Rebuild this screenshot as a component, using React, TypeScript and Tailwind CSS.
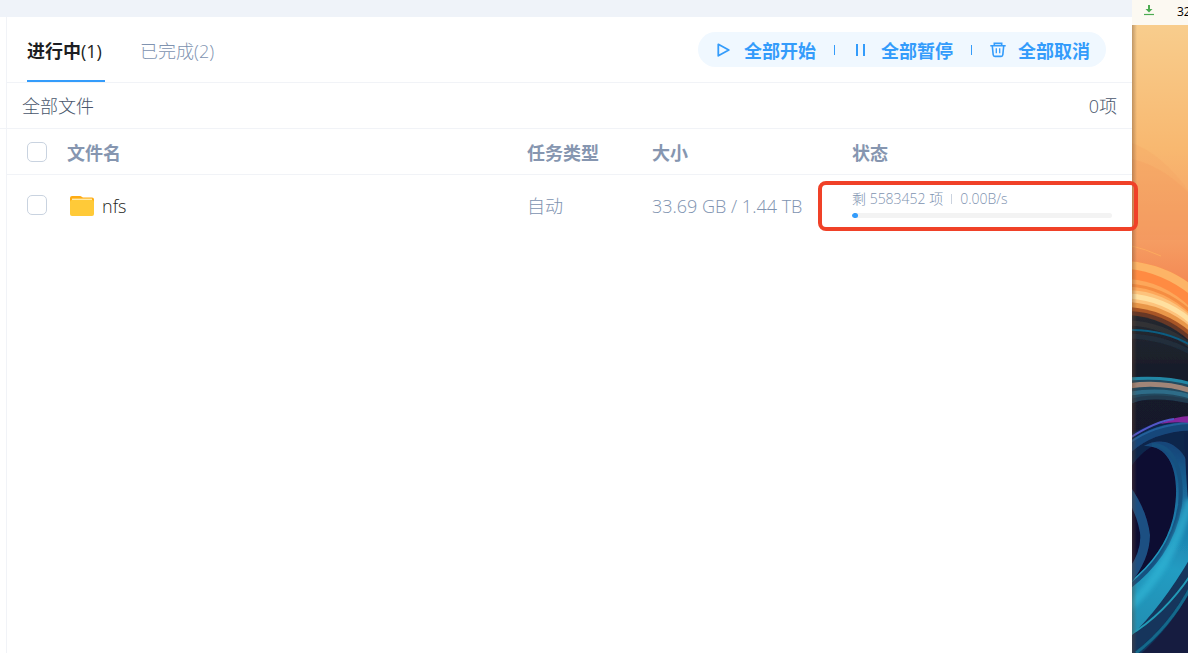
import { ReactNode } from "react";

interface Task {
  name: string;
  type: string;
  size: string;
  remaining: string;
  speed: string;
  progress: number;
}

const tasks: Task[] = [
  {
    name: "nfs",
    type: "自动",
    size: "33.69 GB / 1.44 TB",
    remaining: "剩 5583452 项",
    speed: "0.00B/s",
    progress: 2.3,
  },
];

function PlayIcon() {
  return (
    <svg viewBox="0 0 16 16" className="h-4 w-4 shrink-0" fill="none" stroke="currentColor" strokeWidth="1.8" aria-hidden="true">
      <path d="M2.3 2.3 12.8 8 2.3 13.7Z" strokeLinejoin="round" />
    </svg>
  );
}

function PauseIcon() {
  return (
    <svg viewBox="0 0 16 16" className="h-4 w-4 shrink-0" fill="none" stroke="currentColor" strokeWidth="2" aria-hidden="true">
      <path d="M4 2v12M11 2v12" />
    </svg>
  );
}

function TrashIcon() {
  return (
    <svg viewBox="0 0 16 16" className="h-4 w-4 shrink-0" fill="none" stroke="currentColor" strokeWidth="1.6" aria-hidden="true">
      <path d="M.3 3.7h15.4M4.3 3.5V1.4h7.4v2.1M2.3 4l.9 8.8q.1 1.6 1.7 1.6h6.2q1.6 0 1.7-1.6l.9-8.8" />
      <path d="M6.3 6.3v5M9.7 6.3v5" strokeWidth="1.3" />
    </svg>
  );
}

function FolderIcon() {
  return (
    <svg viewBox="0 0 24 22" className="h-[22px] w-6 shrink-0" aria-hidden="true">
      <path d="M0 3Q0 1 2 1h8q1 0 2 1l1 .6h9q2 0 2 2V10H0Z" fill="#ffac13" />
      <path d="M2 3.6h20V7H2Z" fill="#ffeaa8" />
      <path d="M0 6.8Q0 5 2 5h20q2 0 2 1.8V19q0 2-2 2H2q-2 0-2-2Z" fill="#ffca38" />
    </svg>
  );
}

function ToolbarButton({ icon, children }: { icon: ReactNode; children: ReactNode }) {
  return (
    <button type="button" className="flex items-center gap-3 font-bold text-[#349cfb]">
      {icon}
      <span className="pt-0.5">{children}</span>
    </button>
  );
}

function Divider() {
  return <span className="h-2.5 w-px shrink-0 bg-[#349cfb]" />;
}

function Checkbox({ label }: { label: string }) {
  return (
    <input
      type="checkbox"
      aria-label={label}
      className="block h-5 w-5 appearance-none rounded-[5px] border border-[#c9d3e0] bg-white checked:bg-[#349cfb]"
    />
  );
}

function Wallpaper() {
  return (
    <svg viewBox="0 0 56 628" preserveAspectRatio="none" className="min-h-0 w-full flex-1" aria-hidden="true">
      <defs>
        <linearGradient id="sky" x1="0" y1="0" x2="0" y2="1">
          <stop offset="0" stopColor="#f8cd8d" />
          <stop offset=".4" stopColor="#f8b870" />
          <stop offset=".7" stopColor="#f59c62" />
          <stop offset=".9" stopColor="#f3804d" />
        </linearGradient>
        <linearGradient id="night" x1="0" y1="0" x2="0" y2="1">
          <stop offset="0" stopColor="#26292f" />
          <stop offset=".2" stopColor="#141a2a" />
          <stop offset=".7" stopColor="#131732" />
          <stop offset="1" stopColor="#16193a" />
        </linearGradient>
        <linearGradient id="wave" gradientUnits="userSpaceOnUse" x1="50" y1="425" x2="5" y2="600">
          <stop offset="0" stopColor="#16477a" />
          <stop offset=".35" stopColor="#1c79a8" />
          <stop offset=".65" stopColor="#229cc2" />
          <stop offset="1" stopColor="#2290b4" />
        </linearGradient>
        <linearGradient id="edge">
          <stop offset="0" stopColor="#6b4b35" stopOpacity=".4" />
          <stop offset="1" stopColor="#6b4b35" stopOpacity="0" />
        </linearGradient>
        <filter id="soft" x="-10%" y="-10%" width="120%" height="120%">
          <feGaussianBlur stdDeviation=".7" />
        </filter>
        <filter id="softer" x="-20%" y="-20%" width="140%" height="140%">
          <feGaussianBlur stdDeviation="2" />
        </filter>
      </defs>
      <path d="M0 0H56V310H0Z" fill="url(#sky)" />
      <path d="M0 118Q30 129 56 165V210H0Z" fill="#f49a5c" opacity=".18" />
      <path d="M0 134Q30 141 56 167V215H0Z" fill="#f49158" opacity=".18" />
      <path d="M0 221Q13 224 29 231" fill="none" stroke="#ffb25f" opacity=".7" />

      {/* Warm ribbons */}
      <g filter="url(#soft)">
        <path d="M-4 236Q32 239 60 260V330H-4Z" fill="#ff8b42" />
        <path d="M-4 236Q32 239 60 260V271Q30 247-4 244Z" fill="#fdb466" />
        <path d="M-4 254Q32 256 60 284V330H-4Z" fill="#fda75a" />
        <path d="M-4 260Q32 262 60 288" fill="none" stroke="#f58d42" strokeWidth="3" />
        <path d="M-4 265Q32 266 60 292V330H-4Z" fill="#fdc37b" />
        <path d="M-4 271Q32 273 60 297" fill="none" stroke="#ffe0a0" strokeWidth="5" />
        <path d="M-4 277Q32 279 60 303V330H-4Z" fill="#e9974a" />
        <path d="M-4 282Q32 284 60 308V330H-4Z" fill="#a85425" />
        <path d="M-4 286Q32 287 60 313V330H-4Z" fill="#673725" />
        <path d="M-4 290Q32 292 60 318V640H-4Z" fill="url(#night)" />
        <path d="M-4 298Q32 299 60 322" fill="none" stroke="#39393c" strokeWidth="5" opacity=".6" />
        <path d="M-4 305Q32 304 60 321" fill="none" stroke="#0a5c80" strokeWidth="2" />
        <path d="M-4 311Q31 312 60 328" fill="none" stroke="#22384a" strokeWidth="5" opacity=".5" />

        {/* Middle band */}
        <path d="M-4 352Q34 350 60 359V378Q26 365-4 380Z" fill="#24495e" />
        <path d="M-4 354Q34 351 60 359" fill="none" stroke="#2387a5" strokeWidth="3" />
        <path d="M-4 361Q30 356 60 366" fill="none" stroke="#a08578" strokeWidth="5" />
        <path d="M-4 369Q30 363 60 372" fill="none" stroke="#2f6c88" strokeWidth="4" />
        <path d="M-4 377Q20 368 60 377" fill="none" stroke="#213a50" strokeWidth="4" />

        {/* Blue loop */}
        <path d="M-4 411Q26 392 60 394V640H-4Z" fill="#10254c" />
        <path d="M-4 424Q20 402 60 401" fill="none" stroke="#17467a" strokeWidth="9" />
        <path d="M-4 419Q22 399 60 398" fill="none" stroke="#22609a" strokeWidth="2" />
        <path d="M28 399Q44 391 60 391V398Q42 396 28 399Z" fill="#84269c" />
        <path d="M-4 414Q24 396 42 394" fill="none" stroke="#5357c8" strokeWidth="2" />
        <path d="M-4 446Q12 422 26 420C60 422 64 470 54 505Q36 552-4 590Z" fill="#0f0a30" />
        <path d="M12 421C36 407 58 427 60 455V530Q36 582-4 614V558Q32 530 41 493C49 456 42 420 12 421Z" fill="url(#wave)" />
        <path d="M20 420C44 420 51 450 48 480C42 519 20 544-4 563" fill="none" stroke="#185180" strokeWidth="4" />
        <path d="M56 408Q57 450 60 480" fill="none" stroke="#112348" strokeWidth="7" />
        <path d="M-4 458Q15 484 18 510Q18 535-4 562V545Q10 526 8 508Q5 490-4 476Z" fill="#1c4f82" />
        <path d="M60 560Q30 605-4 640H60Z" fill="#141c40" />
        <path d="M60 530Q30 582-4 614V640Q40 604 60 562Z" fill="#12355c" />
        <path d="M60 548Q32 590-4 611" fill="none" stroke="#249ab6" strokeWidth="2" />
        <path d="M60 560Q38 602 4 628" fill="none" stroke="#12688a" strokeWidth="3" />
      </g>
      <path d="M58 475Q38 545-4 583" fill="none" stroke="#30b8d8" strokeWidth="9" opacity=".6" filter="url(#softer)" />
      <path d="M0 0H5V628H0Z" fill="url(#edge)" />
    </svg>
  );
}

function DesktopEdge() {
  return (
    <aside className="flex w-14 shrink-0 flex-col overflow-hidden">
      <div className="flex h-[25px] shrink-0 items-start justify-between overflow-hidden bg-[#fcf9f2] pl-[11px]">
        <svg viewBox="0 0 12 12" className="mt-1 h-3 w-3 shrink-0" fill="none" stroke="#4dab52" aria-hidden="true">
          <path d="M6 1v6" strokeWidth="2" />
          <path d="M2.5 5h7L6 8.5Z" fill="#4dab52" stroke="none" />
          <path d="M1 10.5h10" strokeWidth="1.2" />
        </svg>
        <div className="w-[11px] shrink-0 pt-1 text-xs leading-4 font-normal text-black">32</div>
      </div>
      <Wallpaper />
    </aside>
  );
}

function TaskRow({ task }: { task: Task }) {
  return (
    <tr className="h-16 text-[#8093b0]">
      <td className="pb-1 pl-5">
        <Checkbox label={task.name} />
      </td>
      <td className="pb-0.5">
        <div className="flex items-center gap-2 pl-[3px] text-[#1d1e22]">
          <FolderIcon />
          <span>{task.name}</span>
        </div>
      </td>
      <td className="pb-0.5">{task.type}</td>
      <td className="pb-0.5">{task.size}</td>
      <td className="relative pr-5">
        <div className="flex items-center gap-2 text-sm leading-5">
          <span>{task.remaining}</span>
          <span className="h-2.5 w-px bg-[#cbd3df]" />
          <span>{task.speed}</span>
        </div>
        <div className="mt-1 mb-2 h-[5px] overflow-hidden rounded-full bg-[#f3f3f3]">
          <div className="h-full rounded-full bg-[#349cfb]" style={{ width: `${task.progress}%` }} />
        </div>
        <div className="pointer-events-none absolute top-1.5 -right-1.5 bottom-2 -left-[34px] z-10 rounded-lg border-4 border-[#f04128]" />
      </td>
    </tr>
  );
}

export default function App() {
  return (
    <div className="flex h-screen bg-white font-['Open_Sans','Noto_Sans_CJK_SC',sans-serif] text-lg leading-6 font-light">
      <main className="flex min-w-0 flex-1 flex-col">
        <div className="h-[17px] shrink-0 bg-[#eff3f9]" />
        <div className="flex min-h-0 flex-1">
          <div className="w-1.5 shrink-0">
            <div className="h-28 border-b border-[#f1f3f7]" />
          </div>
          <section className="min-w-0 flex-1 border-l border-[#f1f3f7]">
            <header className="flex h-[66px] items-center justify-between border-b border-[#f1f3f7] pr-[26px] pl-5">
              <nav className="flex h-full gap-[35px]">
                <button type="button" className="h-full w-[78px] border-b-2 border-[#349cfb] pt-1 text-left font-bold whitespace-nowrap text-[#1d1e22]">
                  进行中<span className="font-medium">(1)</span>
                </button>
                <button type="button" className="h-full border-b-2 border-transparent pt-1 whitespace-nowrap text-[#8093b0]">
                  已完成(2)
                </button>
              </nav>
              <div className="flex h-[35px] items-center gap-[18px] rounded-full bg-[#f0f8ff] pr-4 pl-[18px]">
                <ToolbarButton icon={<PlayIcon />}>全部开始</ToolbarButton>
                <Divider />
                <ToolbarButton icon={<PauseIcon />}>全部暂停</ToolbarButton>
                <Divider />
                <ToolbarButton icon={<TrashIcon />}>全部取消</ToolbarButton>
              </div>
            </header>
            <div className="flex h-[46px] items-center justify-between border-b border-[#f1f3f7] px-[15px] text-[#49566c]">
              <span>全部文件</span>
              <span>0项</span>
            </div>
            <table className="w-full table-fixed border-separate border-spacing-0 text-left">
              <colgroup>
                <col className="w-[60px]" />
                <col />
                <col className="w-[125px]" />
                <col className="w-[200px]" />
                <col className="w-[280px]" />
              </colgroup>
              <thead>
                <tr className="h-[46px] text-[#8696b0] *:border-b *:border-[#f1f3f7]">
                  <th className="pl-5">
                    <Checkbox label="全选" />
                  </th>
                  <th className="pt-0.5">文件名</th>
                  <th className="pt-0.5">任务类型</th>
                  <th className="pt-0.5">大小</th>
                  <th className="pt-0.5">状态</th>
                </tr>
              </thead>
              <tbody>
                {tasks.map((task) => (
                  <TaskRow key={task.name} task={task} />
                ))}
              </tbody>
            </table>
          </section>
        </div>
      </main>
      <DesktopEdge />
    </div>
  );
}
